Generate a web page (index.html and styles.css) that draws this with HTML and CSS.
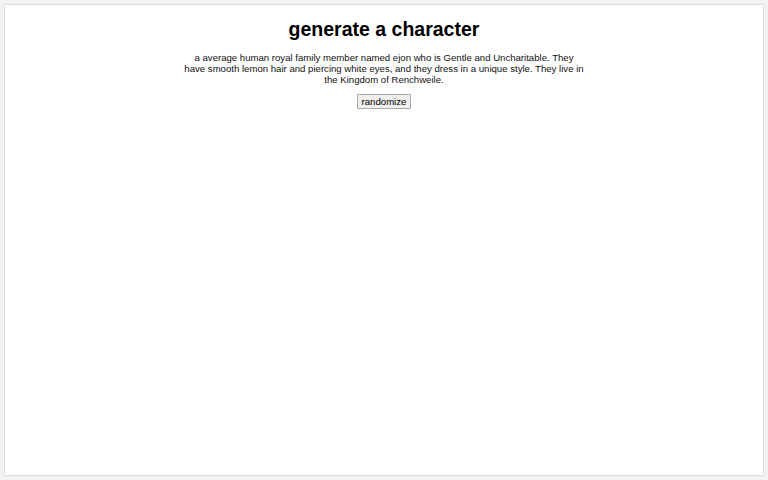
FILE: index.html
```html
<!DOCTYPE html>
<html>
<head>
<meta charset="utf-8">
<link rel="stylesheet" href="styles.css">
</head>
<body>
<div class="card">
  <h1 class="title">generate a character</h1>
  <p class="desc">a average human royal family member named ejon who is Gentle and Uncharitable. They have smooth lemon hair and piercing white eyes, and they dress in a unique style. They live in the Kingdom of Renchweile.</p>
  <button class="btn">randomize</button>
</div>
</body>
</html>
```
FILE: styles.css
```css
html, body {
  margin: 0;
  padding: 0;
  height: 100%;
}
body {
  background: #f3f3f3;
  padding: 4px 4px 4px 4px;
  box-sizing: border-box;
  font-family: "Liberation Sans", Arial, sans-serif;
}
.card {
  background: #fff;
  border: 1px solid #dcdcdc;
  height: 100%;
  box-sizing: border-box;
  display: flex;
  flex-direction: column;
  align-items: center;
}
.title {
  font-size: 19.5px;
  font-weight: bold;
  margin: 13px 0 0 0;
  color: #000;
}
.desc {
  width: 402px;
  text-align: center;
  font-size: 9.6px;
  line-height: 11px;
  margin: 11px 0 0 0;
  color: #111;
}
.btn {
  margin-top: 9px;
  font-family: "Liberation Sans", Arial, sans-serif;
  font-size: 9.6px;
  padding: 1px 4px;
  background: #efefef;
  border: 1px solid #aaa;
  border-radius: 1px;
  color: #000;
}
```
